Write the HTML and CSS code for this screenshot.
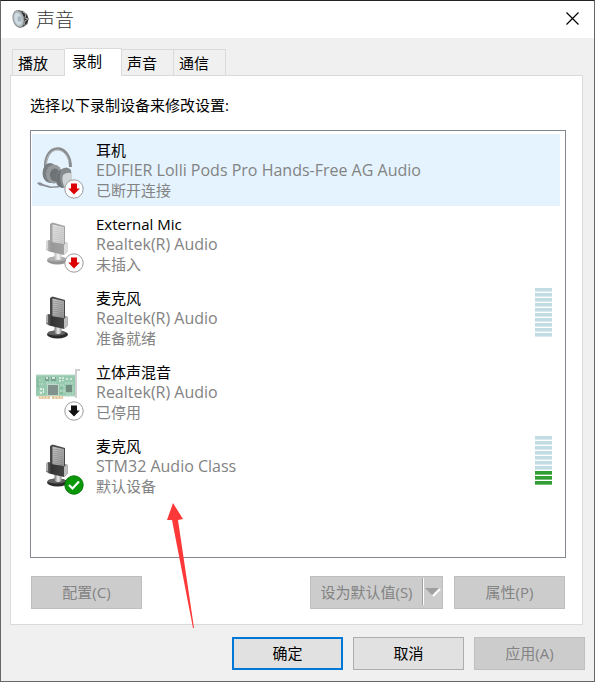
FILE: index.html
```html
<!DOCTYPE html>
<html lang="zh-CN">
<head>
<meta charset="utf-8">
<meta name="viewport" content="width=device-width, initial-scale=1">
<title>声音</title>
<link rel="stylesheet" href="styles.css">
</head>
<body>
<svg class="defs" aria-hidden="true">
  <defs>
    <linearGradient id="steel" x1="0" y1="0" x2="1" y2="1"><stop offset="0" stop-color="#c4c4c4"/><stop offset="1" stop-color="#8e8e8e"/></linearGradient>
    <linearGradient id="dark" x1="0" x2="1"><stop offset="0" stop-color="#777"/><stop offset=".25" stop-color="#333"/><stop offset="1" stop-color="#4a4a4a"/></linearGradient>
    <linearGradient id="shine" x1="0" x2="1"><stop offset="0" stop-color="#777"/><stop offset=".5" stop-color="#eee"/><stop offset="1" stop-color="#999"/></linearGradient>
    <symbol id="mic" viewBox="0 0 48 56">
      <ellipse cx="21.500" cy="46.500" rx="10.500" ry="4" fill="#2c2c2c"/>
      <ellipse cx="20.500" cy="45" rx="9" ry="2.600" fill="#626262"/>
      <path d="M18.500 38h7v7q-3.500 2-7 0z" fill="url(#shine)"/>
      <path d="M14 10l2.500-1.500L29 12v20H14z" fill="#484848"/>
      <path d="M16.500 10.500L28 13v20l-11.500-2z" fill="url(#steel)"/>
      <path d="M18 13v17M20 13v17M22 13v17M24 14v17M26 14v17" stroke="#777" stroke-width=".7" stroke-dasharray="1 1"/>
      <path d="M10 28l2-2 3 .5V28l13 2 2-2 1.500 1v8.500L28 41l-15-3.500-3-2z" fill="url(#dark)"/>
      <path d="M28 31l2.500-3 1 1v8.500L28 41z" fill="#bdbdbd"/>
      <path d="M10 28l2-2v9.500l-2-1z" fill="#b0b0b0"/>
    </symbol>
    <symbol id="down" viewBox="0 0 20 20">
      <circle cx="10" cy="10" r="9.200" fill="#fff" stroke="#999" stroke-width="1"/>
      <path d="M7 4.500h6V9.500h2.800l-5.800 6-5.800-6H7z" fill="currentColor"/>
    </symbol>
  </defs>
</svg>
<main class="dialog">
  <header class="titlebar">
    <svg class="app-icon" viewBox="0 0 17 18" aria-hidden="true">
      <path d="M6 0l5 1 4 3 1.500 5-1 5-4 3L7 18z" fill="#666"/>
      <path d="M10 2l5 3 1.500 4-1.500 4-4 3z" fill="#2e2e2e"/>
      <path d="M11 2l3 2-1 4 3 1-3 2-1 4" fill="none" stroke="#aaa"/>
      <ellipse cx="6.500" cy="9" rx="5.300" ry="8.400" transform="rotate(-14 6.500 9)" fill="#b4bdc1" stroke="#8b9194"/>
      <ellipse cx="6" cy="9" rx="3.600" ry="6.200" transform="rotate(-14 6 9)" fill="#cfdbe1"/>
      <ellipse cx="7.500" cy="9" rx="2" ry="2.800" fill="#a6b6be"/>
    </svg>
    <h1 class="title">声音</h1>
    <button class="close" type="button" aria-label="关闭"><svg viewBox="0 0 13 13"><path d="M.5.5l12 12M12.500.5l-12 12" stroke="#000" stroke-width="1.200"/></svg></button>
  </header>
  <div class="body">
    <nav class="tabs" role="tablist">
      <button class="tab" type="button" role="tab">播放</button>
      <button class="tab selected" type="button" role="tab" aria-selected="true">录制</button>
      <button class="tab" type="button" role="tab">声音</button>
      <button class="tab" type="button" role="tab">通信</button>
    </nav>
    <section class="panel">
      <p class="prompt" id="prompt">选择以下录制设备来修改设置:</p>
      <ul class="devices" role="listbox" aria-labelledby="prompt">
        <li class="device current" role="option" aria-selected="true">
          <div class="icon">
            <svg class="picture" viewBox="0 0 48 56" aria-hidden="true">
              <path d="M9.500 28C8 3 34 2 34.500 27" fill="none" stroke="#898d90" stroke-width="3"/>
              <path d="M10 25C11 6 29 5 33 22" fill="none" stroke="#babec0" stroke-width="1"/>
              <path d="M1 43q3-2 6 1l8 2.500 8-.5v1.500l-9 .5-7-2q-4 0-6-3z" fill="#8b8f93"/>
              <ellipse cx="14" cy="33" rx="7.500" ry="10" fill="#787d80"/>
              <ellipse cx="18" cy="34" rx="8" ry="9.500" fill="#969a9d"/>
              <ellipse cx="19" cy="35" rx="5" ry="6.500" fill="#6e7376"/>
              <path d="M24 30q7-5 11 0l1 11-8 7q-8 0-8-8t4-10z" fill="#858a8d"/>
              <path d="M27 35q5-4 9-1v8l-7 6q-4-7-2-13z" fill="#d0d4d6"/>
              <path d="M20 38q1-6 5-8-3 9 2 18-7-2-7-10z" fill="#6e7376"/>
            </svg>
            <svg class="badge red"><use href="#down"/></svg>
          </div>
          <div class="text"><strong class="name">耳机</strong><span>EDIFIER Lolli Pods Pro Hands-Free AG Audio</span><span>已断开连接</span></div>
        </li>
        <li class="device" role="option">
          <div class="icon"><svg class="picture faded"><use href="#mic"/></svg><svg class="badge red"><use href="#down"/></svg></div>
          <div class="text"><strong class="name">External Mic</strong><span>Realtek(R) Audio</span><span>未插入</span></div>
        </li>
        <li class="device" role="option">
          <div class="icon"><svg class="picture"><use href="#mic"/></svg></div>
          <div class="text"><strong class="name">麦克风</strong><span>Realtek(R) Audio</span><span>准备就绪</span></div>
          <div class="meter"><i></i><i></i><i></i><i></i><i></i><i></i><i></i><i></i><i></i><i></i></div>
        </li>
        <li class="device" role="option">
          <div class="icon">
            <svg class="picture" viewBox="0 0 48 56" aria-hidden="true">
              <path d="M40 36V8h4" fill="none" stroke="#cfcfcf" stroke-width="2"/>
              <path d="M0 13h39v21H0z" fill="#96c9ae"/>
              <path d="M0 13h39M0 34h39" stroke="#b9dbc9" stroke-width="1"/>
              <path d="M3 34h11v3H3zM16 34h11v3H16z" fill="#e5c69b"/>
              <path d="M5 34v3M8 34v3M11 34v3M19 34v3M22 34v3M25 34v3" stroke="#f6e9d2"/>
              <path d="M2 18h4M2 22h6M10 21h10M21 29h8M29 21h8M30 32h7M3 30h6M24 23h4" stroke="#c3e2d1" stroke-dasharray="2 1"/>
              <path d="M11 22h12v12H11z" fill="#bddaca"/><path d="M12 23h10v10H12z" fill="#81938c"/>
              <path d="M9 15h4v4H9zM15 15h5v4h-5z" fill="#79a38e"/><path d="M10 15h2v2h-2zM16 15h3v2h-3z" fill="#d7e6de"/>
              <path d="M30 23h6v7h-6z" fill="#718d80"/><path d="M28 24v7M37 24v7" stroke="#c5ded1" stroke-dasharray="1 1"/>
              <path d="M4 26h2v2H4zM4 30h2v2H4zM7 26h1v5H7z" fill="#e0eee6"/>
              <path d="M24 15v6M27 15v4M31 16v3M35 16v3" stroke="#d1e7dc" stroke-width="2" stroke-dasharray="2 1"/>
              <path d="M24 26h3M24 31h3M2 16v10" stroke="#73ad8f"/>
            </svg>
            <svg class="badge black"><use href="#down"/></svg>
          </div>
          <div class="text"><strong class="name">立体声混音</strong><span>Realtek(R) Audio</span><span>已停用</span></div>
        </li>
        <li class="device" role="option">
          <div class="icon"><svg class="picture"><use href="#mic"/></svg>
            <svg class="badge" viewBox="0 0 20 20"><circle cx="10" cy="10" r="9.200" fill="#0a980a" stroke="#087808"/><path d="M5 10l3.500 3.500L15 6.500" fill="none" stroke="#fff" stroke-width="2.200"/></svg>
          </div>
          <div class="text"><strong class="name">麦克风</strong><span>STM32 Audio Class</span><span>默认设备</span></div>
          <div class="meter"><i></i><i></i><i></i><i></i><i></i><i></i><i></i><i class="on"></i><i class="on"></i><i class="on"></i></div>
        </li>
      </ul>
      <div class="actions">
        <button class="button" type="button" disabled>配置(C)</button>
        <button class="button split" type="button" disabled><span class="label">设为默认值(S)</span><svg class="caret" viewBox="0 0 20 27" aria-hidden="true"><path d="M.5 0v27" stroke="#a0a0a0"/><path d="M1.500 0v27" stroke="#fff"/><path d="M11 18l7-7" stroke="#fff" stroke-width="2"/><path d="M3 10h14l-7 7z" fill="#a0a0a0"/></svg></button>
        <button class="button" type="button" disabled>属性(P)</button>
      </div>
    </section>
    <footer class="footer">
      <button class="button primary" type="button">确定</button>
      <button class="button" type="button">取消</button>
      <button class="button" type="button" disabled>应用(A)</button>
    </footer>
  </div>
  <svg class="pointer" viewBox="0 0 28 126" aria-hidden="true"><path d="M7 0l10 16-5 1 16 108h-1L6 17H1z" fill="#fd3838"/></svg>
</main>
</body>
</html>
```
FILE: styles.css
```css
* { box-sizing: border-box; }

body {
  margin: 0;
  color: #000;
  font: 15px/20px "Open Sans", "Noto Sans CJK SC", sans-serif;
}

.defs { position: absolute; width: 0; height: 0; }

.dialog {
  position: relative;
  display: flex;
  flex-direction: column;
  min-height: 100vh;
  border: 1px solid #666;
  border-top-color: #222;
  background: #f0f0f0;
}

.titlebar {
  display: flex;
  align-items: center;
  height: 37px;
  padding: 0 14px 2px 11px;
  background: #fff;
}

.app-icon { width: 17px; height: 18px; }

.title {
  flex: 1;
  margin: 0 0 0 7px;
  color: #333;
  font: 300 19px/24px "Noto Sans CJK SC", sans-serif;
}

.close { width: 15px; height: 15px; padding: 1px; border: 0; background: none; }
.close svg { display: block; width: 13px; height: 13px; }

.body {
  display: flex;
  flex: 1;
  flex-direction: column;
  padding: 10px 9px 11px;
}

.tabs { display: flex; align-items: flex-end; padding-left: 2px; }

.tab {
  width: 52px;
  height: 26px;
  padding: 0 0 0 5px;
  border: 1px solid #dadada;
  border-width: 1px 1px 0 0;
  background: #f0f0f0;
  color: #000;
  font: inherit;
  text-align: left;
}

.tab:first-child { width: 53px; border-left-width: 1px; }

.tab.selected {
  z-index: 1;
  width: 57px;
  height: 28px;
  margin-bottom: -1px;
  padding: 0 0 4px 7px;
  background: #fff;
}

.panel {
  display: flex;
  flex: 1;
  flex-direction: column;
  margin-right: 2px;
  padding: 19px 16px 15px 19px;
  border: 1px solid #dadada;
  background: #fff;
}

.prompt { margin: 0; }

.devices {
  display: flex;
  flex: 1;
  flex-direction: column;
  gap: 2px;
  margin: 15px 0 18px;
  padding: 3px 5px 3px 1px;
  border: 1px solid #828790;
  list-style: none;
}

.device {
  display: flex;
  height: 72px;
  padding: 6px 8px 6px 4px;
}

.device.current { background: #e5f3ff; }

.icon { position: relative; flex: none; width: 48px; height: 60px; }
.picture { display: block; width: 48px; height: 56px; }
.faded { opacity: 0.5; }
.badge { position: absolute; right: 0; bottom: 1px; width: 20px; height: 20px; }
.red { color: #dc0000; }
.black { color: #111; }

.text {
  display: flex;
  flex: 1;
  flex-direction: column;
  margin-left: 12px;
  color: #838383;
}

.text :lang(zh-CN) { line-height: 20px; }
.text span:nth-child(2) { font-size: 16px; }

.name { color: #000; font-weight: 400; }

.meter { display: flex; flex-direction: column; gap: 1px; width: 17px; }
.meter i { height: 4px; border-bottom: 1px solid #dceaef; background: #c2dce3; }
.meter .on { border-bottom-color: #78be7c; background: #329f32; }

.actions { display: flex; gap: 11px; padding: 0 1px; }
.actions .button:first-child { margin-right: auto; }

.button {
  width: 111px;
  height: 33px;
  padding: 0 0 2px;
  border: 1px solid #adadad;
  background: #e1e1e1;
  color: #000;
  font: inherit;
}

.button:disabled { border-color: #bfbfbf; background: #ccc; color: #838383; }
.button.primary { border: 2px solid #0078d7; }
.button.split { display: flex; align-items: center; width: 133px; }
.label { flex: 1; }
.caret { width: 20px; height: 27px; }

.footer { display: flex; justify-content: flex-end; gap: 10px; margin-top: 12px; }

.pointer {
  position: absolute;
  left: 165px;
  top: 502px;
  width: 28px;
  height: 126px;
}
```
